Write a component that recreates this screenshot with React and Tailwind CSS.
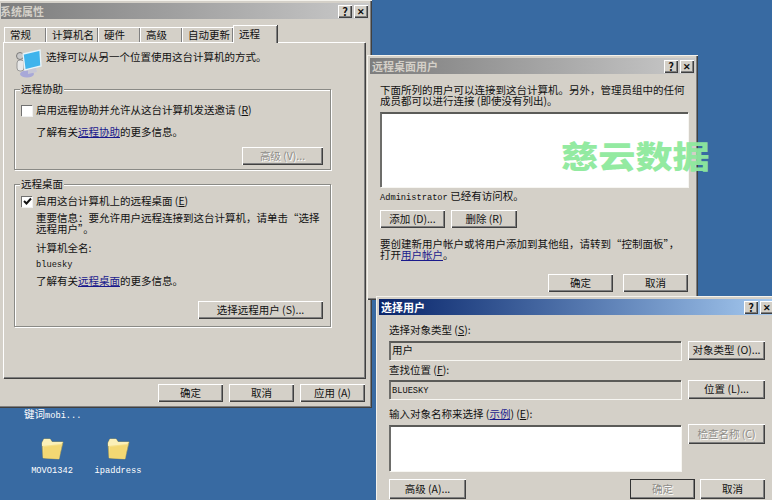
const font = { fontFamily: '"Noto Sans CJK SC", "Liberation Mono", sans-serif' };

const L = ({ children }) => <span className="font-['Liberation_Mono'] text-[8.7px]">{children}</span>;

const Btn = ({ className = "", disabled, children }) => (
  <div
    className={`flex items-center justify-center bg-[#d4d0c8] shadow-[inset_1px_1px_0_#ffffff,inset_-1px_-1px_0_#404040,inset_-2px_-2px_0_#808080] text-[10.5px] leading-none ${
      disabled ? "text-[#8f8d88] [text-shadow:1px_1px_0_#ffffff]" : "text-[#111]"
    } ${className}`}
  >
    {children}
  </div>
);

const TitleBar = ({ title, active, titleClass = "" }) => (
  <div
    className={`h-[16px] flex items-center justify-between pl-[1px] pr-[1px] shrink-0 ${
      active ? "bg-gradient-to-r from-[#0a246a] to-[#a6caf0] text-white" : "bg-gradient-to-r from-[#7d7d7d] to-[#c9c9c9] text-[#d4d0c8]"
    }`}
  >
    <span className={`text-[11px] font-bold leading-none ${titleClass}`}>{title}</span>
    <div className="flex gap-[2px]">
      <Btn className="w-[14px] h-[13px] font-bold !text-[11px]">?</Btn>
      <Btn className="w-[14px] h-[13px] font-bold !text-[9px]">✕</Btn>
    </div>
  </div>
);

const Window = ({ className, children }) => (
  <div className={`absolute bg-[#d4d0c8] p-[3px] flex flex-col shadow-[inset_1px_1px_0_#f4f2ec,inset_-1px_-1px_0_#404040,inset_-2px_-2px_0_#808080] ${className}`}>
    {children}
  </div>
);

const Tab = ({ active, className, children }) => (
  <div
    className={`border-l border-t border-white shadow-[inset_-1px_0_0_#808080,1px_0_0_#404040] text-[10.5px] flex items-center whitespace-nowrap pl-[5px] ${
      active ? "h-[18px] -mb-px relative z-10 bg-[#d4d0c8]" : "h-[15px]"
    } ${className}`}
  >
    {children}
  </div>
);

const Group = ({ title, className, children }) => (
  <div className={`relative border border-[#8a8a86] shadow-[1px_1px_0_#ffffff,inset_1px_1px_0_#ffffff] ${className}`}>
    <span className="absolute -top-[7px] left-[5px] bg-[#d4d0c8] px-[1px] text-[10.5px] leading-[12px]">{title}</span>
    {children}
  </div>
);

const Check = ({ checked }) => (
  <div className="w-[11px] h-[11px] shrink-0 bg-white border-t border-l border-[#707070] shadow-[1px_1px_0_#f0f0f0] flex items-center justify-center">
    {checked && (
      <svg width="9" height="9" viewBox="0 0 9 9">
        <path d="M1 4l2.5 2.5L8 1.5" fill="none" stroke="#111" strokeWidth="2" />
      </svg>
    )}
  </div>
);

const Sunken = ({ className, children }) => (
  <div className={`border-t-2 border-l-2 border-t-[#5b5b58] border-l-[#6d6d6a] shadow-[1px_1px_0_#f7f6f2] ${className}`}>{children}</div>
);

const Link = ({ children }) => <span className="text-[#1a1a8c] underline">{children}</span>;

const Folder = () => (
  <svg width="23" height="23" viewBox="0 0 23 23">
    <path d="M1 6 L2 21 L18 22 L22 5 L11 5 L9 2 L3 2 Z" fill="#f5e08a" stroke="#b8a654" strokeWidth="0.7" />
    <path d="M1 9 L20 7 L22 5 L11 5 L9 2 L3 2 L1 6 Z" fill="#fbf0b8" />
    <path d="M2 21 L18 22 L20 8 L3 10 Z" fill="#f3d873" />
  </svg>
);

const RemoteIcon = () => (
  <svg width="30" height="30" viewBox="0 0 30 30" className="shrink-0">
    <ellipse cx="13" cy="25" rx="7" ry="3.5" fill="#a8a8d8" />
    <circle cx="6" cy="7" r="3.5" fill="#c8c8c8" stroke="#666" strokeWidth="0.8" />
    <rect x="3" y="11" width="7" height="11" rx="3" fill="#e8e8e8" stroke="#888" strokeWidth="0.8" />
    <path d="M9 5 L26 1 L27 17 L11 21 Z" fill="#3fb4ec" stroke="#e8f4fa" strokeWidth="1.4" />
    <path d="M14 21 L22 19 L23 23 L14 25 Z" fill="#c6c6d6" />
  </svg>
);

export default function App() {
  return (
    <div className="relative w-[772px] h-[500px] overflow-hidden bg-[#386aa2] text-[#111]" style={font}>
      {/* desktop icons */}
      <div className="absolute left-[24px] top-[408px] text-[10.5px] leading-[12px] text-white">键词<L>mobi...</L></div>
      <div className="absolute left-[24px] top-[437px] w-[56px] flex flex-col items-center gap-[5px] text-white leading-[12px]">
        <Folder />
        <L>MOVO1342</L>
      </div>
      <div className="absolute left-[90px] top-[437px] w-[56px] flex flex-col items-center gap-[5px] text-white leading-[12px]">
        <Folder />
        <L>ipaddress</L>
      </div>

      {/* system properties */}
      <Window className="-left-[2px] top-0 w-[374px] h-[408px]">
        <TitleBar title="系统属性" titleClass="-ml-[2px]" />
        <div className="flex mt-[6px] ml-[3px] items-end h-[17px] shrink-0 leading-none">
          <Tab className="w-[42px]">常规</Tab>
          <Tab className="w-[52px]">计算机名</Tab>
          <Tab className="w-[42px]">硬件</Tab>
          <Tab className="w-[42px]">高级</Tab>
          <Tab className="w-[51px]">自动更新</Tab>
          <Tab active className="w-[44px]">远程</Tab>
        </div>
        <div className="ml-[2px] w-[362px] h-[336px] border-t border-l border-white shadow-[inset_-1px_-1px_0_#808080,1px_1px_0_#404040] pt-[6px] pl-[10px] text-[10.5px]">
          <div className="flex items-start gap-[2px] h-[30px]">
            <RemoteIcon />
            <span className="mt-[2px] leading-[12px]">选择可以从另一个位置使用这台计算机的方式。</span>
          </div>
          <Group title="远程协助" className="mt-[10px] w-[317px] h-[81px] pt-[14px] pl-[6px]">
            <div className="flex items-center gap-[4px] h-[12px] leading-none">
              <Check />
              <span>启用远程协助并允许从这台计算机发送邀请 (<span className="underline">R</span>)</span>
            </div>
            <div className="mt-[10px] ml-[15px] leading-[12px]">了解有关<Link>远程协助</Link>的更多信息。</div>
            <div className="flex justify-end pr-[7px] mt-[9px]">
              <Btn disabled className="w-[81px] h-[18px]">高级 (V)...</Btn>
            </div>
          </Group>
          <Group title="远程桌面" className="mt-[14px] w-[317px] h-[143px] pt-[10px] pl-[6px]">
            <div className="flex items-center gap-[4px] h-[12px] leading-none">
              <Check checked />
              <span>启用这台计算机上的远程桌面 (<span className="underline">E</span>)</span>
            </div>
            <div className="mt-[5px] ml-[15px] leading-[11px] whitespace-nowrap">
              重要信息：要允许用户远程连接到这台计算机，请单击“选择<br />远程用户”。
            </div>
            <div className="mt-[8px] ml-[15px] leading-[12px]">计算机全名:</div>
            <div className="mt-[3px] ml-[15px] leading-[12px]"><L>bluesky</L></div>
            <div className="mt-[4px] ml-[15px] leading-[12px]">了解有关<Link>远程桌面</Link>的更多信息。</div>
            <div className="flex justify-end pr-[7px] mt-[14px]">
              <Btn className="w-[125px] h-[18px]">选择远程用户 (S)...</Btn>
            </div>
          </Group>
        </div>
        <div className="flex justify-end gap-[6px] mt-[6px] w-[364px]">
          <Btn className="w-[65px] h-[18px]">确定</Btn>
          <Btn className="w-[65px] h-[18px]">取消</Btn>
          <Btn className="w-[65px] h-[18px]">应用 (A)</Btn>
        </div>
      </Window>

      {/* remote desktop users */}
      <Window className="left-[367px] top-[55px] w-[331px] h-[245px]">
        <TitleBar title="远程桌面用户" titleClass="ml-[1px]" />
        <div className="pl-[10px] pt-[10px] text-[10.5px]">
          <div className="leading-[11px] whitespace-nowrap">
            下面所列的用户可以连接到这台计算机。另外，管理员组中的任何<br />成员都可以进行连接 (即使没有列出)。
          </div>
          <Sunken className="mt-[6px] w-[308px] h-[75px] bg-white" />
          <div className="leading-[12px] mt-[3px]"><L>Administrator</L> 已经有访问权。</div>
          <div className="flex gap-[6px] mt-[6px]">
            <Btn className="w-[65px] h-[18px]">添加 (D)...</Btn>
            <Btn className="w-[66px] h-[18px]">删除 (R)</Btn>
          </div>
          <div className="mt-[10px] leading-[11px] whitespace-nowrap">
            要创建新用户帐户或将用户添加到其他组，请转到“控制面板”，<br />打开<Link>用户帐户</Link>。
          </div>
          <div className="flex justify-end gap-[10px] mt-[14px] w-[308px]">
            <Btn className="w-[65px] h-[18px]">确定</Btn>
            <Btn className="w-[65px] h-[18px]">取消</Btn>
          </div>
        </div>
      </Window>

      {/* select users */}
      <Window className="left-[376px] top-[296px] w-[399px] h-[206px] !pr-[0px]">
        <TitleBar title="选择用户" active titleClass="ml-[1px]" />
        <div className="pl-[10px] pt-[9px] text-[10.5px]">
          <div className="leading-[12px]">选择对象类型 (<span className="underline">S</span>):</div>
          <div className="flex gap-[7px] mt-[5px]">
            <Sunken className="w-[292px] h-[19px] bg-[#d4d0c8] pl-[1px] leading-[13px]">用户</Sunken>
            <Btn className="w-[77px] h-[19px]">对象类型 (O)...</Btn>
          </div>
          <div className="leading-[12px] mt-[4px]">查找位置 (<span className="underline">F</span>):</div>
          <div className="flex gap-[7px] mt-[4px]">
            <Sunken className="w-[292px] h-[19px] bg-[#d4d0c8] pl-[1px] leading-[13px]"><L>BLUESKY</L></Sunken>
            <Btn className="w-[77px] h-[19px]">位置 (L)...</Btn>
          </div>
          <div className="leading-[12px] mt-[9px]">输入对象名称来选择 (<Link>示例</Link>) (<span className="underline">E</span>):</div>
          <div className="flex gap-[7px] mt-[5px] items-start">
            <Sunken className="w-[292px] h-[46px] bg-white" />
            <Btn disabled className="w-[77px] h-[20px] -mt-[1px]">检查名称 (C)</Btn>
          </div>
          <div className="flex mt-[8px] w-[376px]">
            <Btn className="w-[77px] h-[20px]">高级 (A)...</Btn>
            <Btn disabled className="w-[65px] h-[20px] ml-auto ring-1 ring-inset ring-[#333]">确定</Btn>
            <Btn className="w-[65px] h-[20px] ml-[5px]">取消</Btn>
          </div>
        </div>
      </Window>

      {/* watermark */}
      <div className="absolute left-[561px] top-[133px] text-[31px] leading-[44px] scale-x-[1.2] origin-left font-black text-[#8ee99d] whitespace-nowrap opacity-95">慈云数据</div>
    </div>
  );
}
